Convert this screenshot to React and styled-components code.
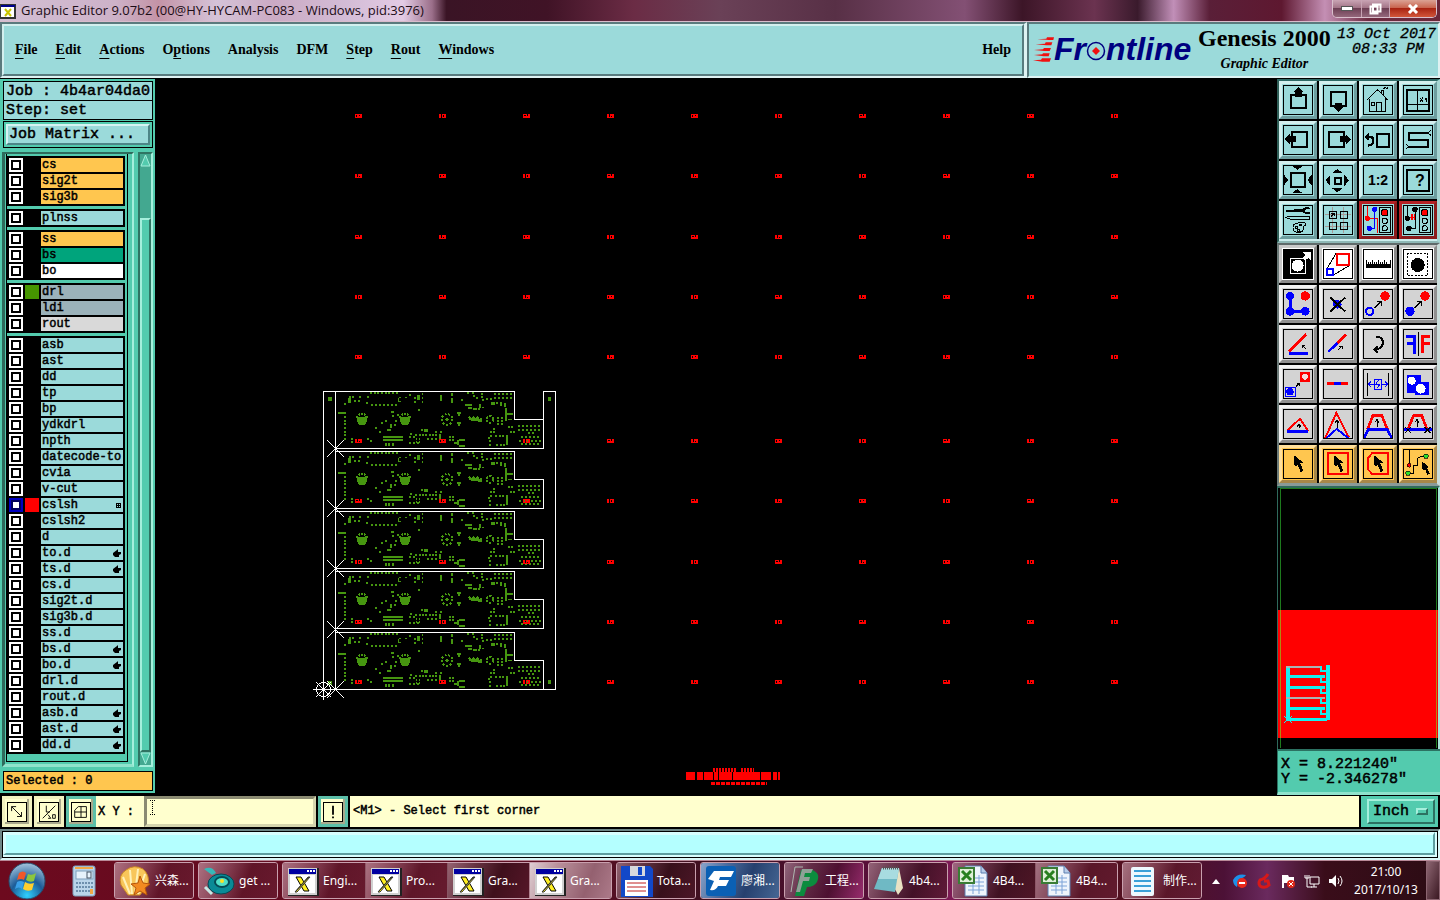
import React from "react";
import styled, { createGlobalStyle, css } from "styled-components";

const GlobalStyle = createGlobalStyle`
  *, *::before, *::after { box-sizing: border-box; }
  html, body { margin: 0; padding: 0; background: #000; }
  button, input, select { font: inherit; color: inherit; margin: 0; padding: 0; border-radius: 0; }
`;

const serif = `"Liberation Serif", serif`;
const mono = `"Liberation Mono", monospace`;
const sans = `"Noto Sans", "Noto Sans CJK SC", sans-serif`;

const aqua = "#9bdada";
const teal = "#53cbae";
const amber = "#ffc64f";

const inset = (dark, light) => css`
  border: 2px solid;
  border-color: ${dark} ${light} ${light} ${dark};
`;
const outset = (light, dark, width = 2) => css`
  border: ${width}px solid;
  border-color: ${light} ${dark} ${dark} ${light};
`;

const Desktop = styled.div`
  min-height: 100vh;
  display: flex;
  flex-direction: column;
  background: #000;
  color: #000;
`;

/* ---------- window title ---------- */

const TitleBar = styled.header`
  height: 22px;
  flex: none;
  display: flex;
  align-items: flex-start;
  border-bottom: 1px solid #d9bccb;
  font: 13px/21px "Open Sans", sans-serif;
  color: #1c0c16;
  background: linear-gradient(90deg, #d3bfd4 0, #cdb2c8 8%, #c493a6 11%, #d5c3d8 15%, #cbaac4 19%, #d3bcd6 24%, #e3cbe4 28%,
    #9b6f8a 30%, #3a1425 31%, #401326 38%, #6b2c45 44%, #6a4157 50%, #583046 58%, #835074 67%,
    #3c1527 71%, #6b3350 76%, #3a1a2c 79%, #c18fb8 81.5%, #5a1f38 84%, #5e1830 89%, #c48fb4 92%, #6e2c42 95%, #6b2638 100%);
`;
const TitleIcon = styled.svg`
  width: 16px;
  height: 16px;
  margin: 4px 5px 0 0;
  flex: none;
`;
const TitleText = styled.h1`
  margin: 0;
  flex: 1;
  font: inherit;
  white-space: nowrap;
`;
const WindowButtons = styled.div`
  display: flex;
  margin-right: 3px;
  height: 18px;
  border: 1px solid #d9c0cc;
  border-top: 0;
  border-radius: 0 0 5px 5px;
  overflow: hidden;
`;
const WindowButton = styled.button`
  width: ${(p) => (p.$close ? 47 : 28)}px;
  border: 0;
  border-left: ${(p) => (p.$first ? 0 : 1)}px solid #c7a3b3;
  display: flex;
  align-items: center;
  justify-content: center;
  background: ${(p) =>
    p.$close
      ? "linear-gradient(#dba294 0, #c9654f 45%, #a92412 50%, #d2563a 100%)"
      : "linear-gradient(#c9a4b4 0, #a37588 45%, #6d3f54 50%, #94677b 100%)"};
`;

/* ---------- menu + brand ---------- */

const TopRow = styled.div`
  height: 57px;
  flex: none;
  display: grid;
  grid-template-columns: minmax(0, 1fr) 413px;
  border-bottom: 1px solid #000;
`;
const MenuFrame = styled.div`
  ${inset("#5a7a7d", "#def2f2")}
  border-right-width: 3px;
  background: ${aqua};
`;
const MenuBar = styled.nav`
  ${outset("#d3efee", "#587b7e")}
  height: 100%;
  display: flex;
  align-items: center;
  gap: 18px;
  padding: 0 11px;
  font: bold 14px/20px ${serif};
`;
const MenuButton = styled.button`
  border: 0;
  background: none;
  margin-left: ${(p) => (p.$end ? "auto" : "0")};
  u { text-underline-offset: 4px; text-decoration-thickness: 1px; text-decoration-skip-ink: none; }
`;
const Brand = styled.div`
  ${inset("#5a7a7d", "#def2f2")}
  background: ${aqua};
  display: flex;
  padding: 0 2px 0 4px;
`;
const Logo = styled.div`
  display: flex;
  align-items: center;
  height: 50px;
  color: #000080;
  font: italic bold 32px/36px "Liberation Sans", sans-serif;
`;
const Product = styled.div`
  margin-left: 3px;
  width: 140px;
  text-align: center;
  white-space: nowrap;
`;
const ProductName = styled.div`
  font: bold 24px/28px ${serif};
`;
const ProductPart = styled.div`
  font: italic bold 14px/24px ${serif};
`;
const Clock = styled.div`
  flex: 1;
  text-align: right;
  font: italic 15px/15px ${mono};
  padding-top: 3px;
  white-space: nowrap;
  -webkit-text-stroke: 0.3px #000;
  span { display: block; }
  span + span { padding-right: 12px; }
`;

/* ---------- main area ---------- */

const Main = styled.main`
  flex: 1;
  display: flex;
  min-height: 716px;
`;

const Side = styled.aside`
  width: 155px;
  flex: none;
  display: flex;
  flex-direction: column;
  background: ${teal};
  padding: 2px 2px 2px 3px;
  border-bottom: 2px solid #000;
`;
const InfoLine = styled.div`
  height: 20px;
  border: 1px solid #000;
  margin-bottom: -1px;
  background: ${aqua};
  padding-left: 2px;
  font: 15px/20px ${mono};
  -webkit-text-stroke: 0.5px #000;
  white-space: nowrap;
`;
const MatrixBox = styled.div`
  border: 1px solid #000;
  height: 27px;
  margin-top: 2px;
  padding: 2px;
`;
const MatrixButton = styled.button`
  ${outset("#d6f3f2", "#4d8587")}
  display: block;
  width: 100%;
  height: 21px;
  background: ${aqua};
  text-align: left;
  padding-left: 1px;
  font: 15px/16px ${mono};
  -webkit-text-stroke: 0.5px #000;
`;
const ListArea = styled.div`
  flex: 1;
  display: flex;
  margin-top: 4px;
  margin-left: -1px;
`;
const ListFrame = styled.div`
  width: 132px;
  border-style: solid;
  border-width: 2px 5px 3px 3px;
  border-color: #2f6a5c #8fe3cc #8fe3cc #2f6a5c;
  border-right: 2px solid #a5efdc;
  background: ${teal};
  padding: 0 4px 2px 1px;
  display: flex;
`;
const ListInner = styled.div`
  flex: 1;
  border: 1px solid #000;
  border-top: 0;
  padding-top: 2px;
  padding-right: 2px;
`;
const Group = styled.div`
  background: #000;
  padding: 1px 2px 1px 2px;
  margin-bottom: 3px;
`;
const LayerRow = styled.label`
  display: flex;
  height: 16px;
  align-items: center;
  gap: 2px;
  font: 12px/14px ${mono};
`;
const LayerCheck = styled.input`
  appearance: none;
  width: 14px;
  height: 14px;
  flex: none;
  background: #fff;
  border: 2px solid ${(p) => (p.$active ? "#0000c0" : "#fff")};
  box-shadow: inset 0 0 0 2px ${(p) => (p.$active ? "#00005c" : "#000")};
`;
const Swatch = styled.span`
  width: 14px;
  height: 14px;
  flex: none;
  background: ${(p) => p.$color || "#000"};
`;
const LayerName = styled.span`
  flex: 1;
  height: 14px;
  display: flex;
  justify-content: space-between;
  align-items: center;
  padding: 0 2px 0 1px;
  white-space: nowrap;
  background: ${(p) => p.$color};
  -webkit-text-stroke: 0.5px #000;
`;
const ScrollBar = styled.div`
  width: 15px;
  margin-left: 4px;
  ${inset("#2f7463", "#a5efdc")}
  background: #43a890;
  display: flex;
  flex-direction: column;
`;
const ScrollThumb = styled.div`
  flex: 1;
  margin-top: 51px;
  border: solid;
  border-width: 2px;
  border-color: #a5efdc #2f7463 #2f7463 #a5efdc;
  background: ${teal};
`;
const Selected = styled.div`
  height: 20px;
  margin-top: 4px;
  border: 1px solid #000;
  background: ${amber};
  padding-left: 2px;
  font: 12px/18px ${mono};
  -webkit-text-stroke: 0.5px #000;
`;

const Canvas = styled.section`
  flex: 1;
  min-width: 0;
  background: #000;
  display: flex;
  svg { width: 100%; height: 716px; }
`;

/* ---------- tool palette ---------- */

const ToolSide = styled.aside`
  width: 163px;
  flex: none;
  display: flex;
  flex-direction: column;
  background: #000;
`;
const palettes = {
  aqua: { bg: aqua, light: "#d3efee", dark: "#6d9d9e" },
  red: { bg: aqua, light: "#b52024", dark: "#8c1c1c" },
  white: { bg: "#fff", light: "#c9c9c9", dark: "#8a8a8a" },
  gray: { bg: "#d3d3d3", light: "#f2f2f2", dark: "#8f8f8f" },
  amber: { bg: amber, light: "#ffdf9c", dark: "#a78748" },
};
const ToolPanel = styled.div`
  background: ${(p) => (p.$gray ? "#8a9a98" : "#cdeeee")};
  border: 2px solid;
  border-right-width: 3px;
  padding-bottom: ${(p) => (p.$gray ? 1 : 2)}px;
  border-color: ${(p) => (p.$gray ? "#5f6a6a #c9dcda #8a9a98 #6d7c7a" : "#2f6a66 #a6d6d3 #8fb8b6 #2f5f58")};
`;
const ToolGrid = styled.div`
  background: #000;
  display: grid;
  grid-template-columns: repeat(4, 38px);
  gap: 2px;
`;
const ToolButton = styled.button`
  width: 38px;
  height: 38px;
  display: flex;
  align-items: center;
  justify-content: center;
  background: ${(p) => palettes[p.$kind].bg};
  border: 3px solid;
  border-color: ${(p) => {
    const { light, dark } = palettes[p.$kind];
    return `${light} ${dark} ${dark} ${light}`;
  }};
`;
const ToolIcon = styled.svg`
  width: 30px;
  height: 30px;
  flex: none;
  border: 1px solid #000;
`;
const Overview = styled.div`
  flex: 1;
  border-top: 2px solid #2f6a5c;
  border-left: 1px solid #2f6a5c;
  border-right: 2px solid #a8e6da;
  display: flex;
  svg { width: 100%; height: 260px; }
`;
const Readout = styled.dl`
  margin: 0;
  height: 46px;
  border-top: 2px solid #2c7262;
  border-bottom: 3px solid #8fe3cc;
  border-left: 1px solid #2c7262;
  background: ${teal};
  padding: 6px 3px;
  font: 15px/15px ${mono};
  -webkit-text-stroke: 0.5px #000;
  div { display: flex; gap: 9px; }
  dd { margin: 0; }
`;

/* ---------- command and message lines ---------- */

const CommandBar = styled.form`
  height: 34px;
  flex: none;
  display: flex;
  align-items: stretch;
  gap: 2px;
  padding: 1px 2px 2px;
  background: #000;
  font: 12px/16px ${mono};
  -webkit-text-stroke: 0.5px #000;
`;
const CommandButton = styled.button`
  width: 30px;
  display: flex;
  align-items: center;
  justify-content: center;
  border: 3px solid ${(p) => (p.$on ? "#5cbfa8" : "#f2f2c0")};
  background: #ffffce;
  box-shadow: inset -1px -1px 0 1px #a9a98c;
  svg { width: 20px; height: 20px; border: 1px solid #000; flex: none; }
`;
const CommandField = styled.label`
  position: relative;
  display: flex;
  align-items: center;
  gap: 10px;
  background: #ffffce;
  padding-left: 2px;
  margin-left: -2px;
  width: 220px;
  white-space: pre;
`;
const CommandInput = styled.input`
  flex: 1;
  min-width: 0;
  height: 31px;
  background: #ffffce;
  border: 3px solid;
  border-color: #8b8b72 #d5d5ae #d5d5ae #8b8b72;
  padding: 0 5px;
  outline: 0;
`;
const TextPointer = styled.svg`
  position: absolute;
  left: 54px;
  top: 4px;
  width: 5px;
  height: 15px;
`;
const Hint = styled.output`
  flex: 1;
  background: #ffffce;
  padding-left: 3px;
  line-height: 31px;
`;
const UnitFrame = styled.span`
  width: 77px;
  background: ${teal};
  padding: 3px 3px 3px 6px;
`;
const UnitBox = styled.span`
  ${outset("#a5efdc", "#2c7262")}
  height: 100%;
  display: flex;
  align-items: center;
  justify-content: space-between;
  padding: 0 5px 0 4px;
  font: 15px/20px ${mono};
`;
const UnitSelect = styled.select`
  appearance: none;
  border: 0;
  background: none;
  width: 42px;
`;
const UnitMark = styled.span`
  width: 12px;
  height: 7px;
  ${outset("#a5efdc", "#2c7262")}
`;
const StatusFrame = styled.div`
  height: 31px;
  flex: none;
  border-top: 2px solid #6f8787;
  border-left: 2px solid #6f8787;
  border-right: 2px solid #d8f7f7;
  border-bottom: 2px solid #d8f7f7;
`;
const StatusBox = styled.div`
  height: 100%;
  border: 1px solid #000;
  background: #d8ffff;
  padding: 0 2px 2px 0;
`;
const StatusLine = styled.div`
  height: 100%;
  background: #b4ffff;
  border: 3px solid;
  border-color: #d8ffff #5d9ea0 #5d9ea0 #d8ffff;
  border-width: 3px 2px 2px 3px;
`;

/* ---------- taskbar ---------- */

const TaskBar = styled.footer`
  height: 40px;
  flex: none;
  display: flex;
  align-items: stretch;
  border-top: 1px solid #b98a98;
  color: #fff;
  font: 12px/18px ${sans};
  background: linear-gradient(90deg, #6d0a1e 0, #650b20 14%, #5b1024 40%, #3c1020 50%, #5c0f3c 62%, #7d1a55 66%, #4a1020 72%,
    #551020 80%, #4c1136 85%, #6a2a5e 88%, #3a0d1a 92%, #2c0c14 100%);
`;
const StartButton = styled.button`
  border: 0;
  background: none;
  width: 54px;
  display: flex;
  align-items: center;
  justify-content: center;
`;
const PinnedButton = styled(StartButton)`
  width: 60px;
`;
const TaskList = styled.div`
  display: flex;
  gap: 4px;
  flex: 1;
  padding: 1px 0;
`;
const TaskGroup = styled.div`
  display: flex;
  border: 1px solid #c9a0ae;
  border-radius: 3px;
  overflow: hidden;
`;
const taskTone = {
  plain: "linear-gradient(110deg, #cfa3b0aa 0, #9d6173aa 30%, #5e1a2caa 60%, #6a2034aa 100%)",
  dark: "linear-gradient(110deg, #b18d98aa 0, #6b4450aa 30%, #301018aa 60%, #521a2aaa 100%)",
  active: "linear-gradient(110deg, #ffffffcc 0, #d2b1bacc 30%, #a37583cc 70%, #c294a2cc 100%)",
  blue: "linear-gradient(110deg, #8aa5cb 0, #4a6a9c 30%, #26406e 60%, #466794 100%)",
  pink: "linear-gradient(110deg, #b690a4aa 0, #6d3a52aa 30%, #4c1030aa 60%, #b83a88aa 100%)",
};
const TaskButton = styled.button`
  width: ${(p) => (p.$grouped ? 82 : 78)}px;
  border: 0;
  display: flex;
  align-items: center;
  gap: 3px;
  padding-left: 3px;
  background: ${(p) => taskTone[p.$tone]};
  white-space: nowrap;
  & + & { border-left: 1px solid #b58d9a88; }
  svg { width: 34px; height: 32px; flex: none; }
`;
const Tray = styled.div`
  display: flex;
  align-items: center;
  gap: 8px;
  padding-right: 6px;
  svg { width: 16px; height: 16px; flex: none; }
`;
const TrayClock = styled.time`
  width: 68px;
  text-align: center;
  white-space: nowrap;
  span { display: block; }
`;
const ShowDesktop = styled.button`
  width: 14px;
  border: 1px solid #8b6470;
  background: linear-gradient(110deg, #8d6672, #3b1822);
`;

/* ---------- data ---------- */

const layerGroups = [
  [["cs", amber], ["sig2t", amber], ["sig3b", amber]],
  [["plnss", aqua]],
  [["ss", amber], ["bs", "#00a47c"], ["bo", "#fff"]],
  [["drl", "#9bb2ba", "#469600"], ["ldi", "#9bb2ba"], ["rout", "#d9d9d9"]],
  [
    ["asb"], ["ast"], ["dd"], ["tp"], ["bp"], ["ydkdrl"], ["npth"], ["datecode-to"], ["cvia"], ["v-cut"],
    ["cslsh", aqua, "#ff0000", "grid"], ["cslsh2"], ["d"], ["to.d", aqua, null, "hand"], ["ts.d", aqua, null, "hand"],
    ["cs.d"], ["sig2t.d"], ["sig3b.d"], ["ss.d"], ["bs.d", aqua, null, "hand"], ["bo.d", aqua, null, "hand"],
    ["drl.d"], ["rout.d"], ["asb.d", aqua, null, "hand"], ["ast.d", aqua, null, "hand"], ["dd.d", aqua, null, "hand"],
  ],
];

const K = "#000";
const B = "#0000ff";
const R = "#ff0000";
/* icon strokes are drawn on a grid of three units to the pixel */
const pen = (w) => (w <= 3 ? 3 : w <= 6 ? 6 : w);
const ln = (d, c = K, w = 3) => <path d={d} fill="none" stroke={c} strokeWidth={pen(w)} />;
const arrowUp = (x, top, bottom) => ln(`M${x} ${bottom}V${top}M${x - 6} ${top + 8}L${x} ${top}L${x + 6} ${top + 8}`);
const diagArrow = ln("M34 58L54 38M42 38H54V50");
const cursor = <path d="M32 18L60 40L52 43L61 65L53 69L44 48L35 54Z" />;
const light = (
  <>
    <rect x="50" y="7" width="32" height="76" fill={aqua} stroke={K} strokeWidth="3" />
    <circle cx="65" cy="23" r="10" fill={R} stroke={K} strokeWidth="3" />
    <circle cx="65" cy="48" r="8" fill="none" stroke={K} strokeWidth="3" />
    <circle cx="65" cy="70" r="8" fill="none" stroke={K} strokeWidth="3" />
  </>
);

const viewTools = [
  ["aqua", "Pan up", <>{ln("M24 30H69V69H24Z", K, 5)}<path d="M46 6L62 22H56V36H36V22H30Z" /></>],
  ["aqua", "Pan down", <>{ln("M24 21H69V63H24Z", K, 5)}<path d="M46 82L30 66H36V54H56V66H62Z" /></>],
  ["aqua", "Home view", <>{ln("M12 45L44 14L74 45M20 42V80H66V42M40 80V53H54V80M26 52H33V60H26ZM56 24V16H62V30M62 12L68 6M70 12L74 8")}</>],
  ["aqua", "Zoom to XY", <>{ln("M12 15H78V78H12Z", K, 4)}{ln("M11 58H77M44 13V78M52 38L60 50M60 38L52 50M65 38L69 44L73 38M69 44V50", K, 2)}</>],
  ["aqua", "Pan left", <>{ln("M27 21H72V66H27Z", K, 5)}<path d="M5 43L20 28V34H38V52H20V58Z" /></>],
  ["aqua", "Pan right", <>{ln("M18 21H63V66H18Z", K, 5)}<path d="M84 43L69 28V34H51V52H69V58Z" /></>],
  ["aqua", "Previous view", <>{ln("M42 27H78V66H42Z", K, 5)}{ln("M12 35H22Q32 38 31 48Q29 61 14 62", K, 7)}<path d="M3 36L18 24V47Z" /></>],
  ["aqua", "Serpentine", <>{ln("M76 24H18V45H75V66H18", K, 5)}{ln("M82 16L75 25L84 31M10 58L18 65L8 73", K, 2)}</>],
  ["aqua", "Zoom in", <>{ln("M24 24H66V66H24Z", K, 5)}<path d="M28 4H58L43 14ZM28 84H58L43 72ZM4 30V60L15 45ZM86 30V60L73 45Z" /></>],
  ["aqua", "Zoom out", <>{ln("M36 39H54V57H36Z", K, 5)}<path d="M26 25L43 12L60 25ZM26 69L43 82L60 69ZM22 29V63L8 46ZM64 29V63L78 46Z" /></>],
  ["aqua", "Scale one to two", <text x="45" y="61" fontSize="42" fontWeight="bold" textAnchor="middle" fontFamily="Liberation Sans">1:2</text>],
  ["aqua", "Help", <>{ln("M12 15H78V78H12Z", K, 4)}<text x="51" y="64" fontSize="48" fontWeight="bold" textAnchor="middle" fontFamily="Liberation Sans">?</text></>],
  ["aqua", "Setup", <>{ln("M8 17H36", K, 4)}{ln("M34 17H62", K, 10)}{ln("M80 11L72 9Q60 12 62 17Q64 27 80 23", K, 6)}{ln("M8 37L20 33H80V42H20Z", K, 2)}{ln("M30 70Q28 56 44 54Q66 48 68 58Q68 62 60 64Q66 72 56 80Q40 86 30 76Z")}{ln("M38 64H44V70H38ZM48 58H54V62H48ZM44 73H50V78H44Z", K, 2)}</>],
  ["aqua", "Panels", <>{ln("M5 29H85M5 63H85M28 5V85M62 5V85", "#a89a96", 2)}{ln("M18 19H39V40H18ZM51 19H73V40H51ZM18 53H39V74H18ZM51 53H73V74H51Z")}{ln("M23 35L33 25M25 25H33V33", K, 2)}</>],
  ["red", "Online check", <>{ln("M13 3V40H43V84", R)}{ln("M35 13V70H19", B)}<circle cx="13" cy="40" r="8" fill={R} /><circle cx="35" cy="13" r="8" fill={B} /><circle cx="19" cy="70" r="8" fill={B} />{light}</>],
  ["red", "Spacing check", <>{ln("M13 3V40M36 13V70H18")}{ln("M22 36H34M24 26V44M29 28V44M34 28V44", R)}<circle cx="13" cy="40" r="8" /><circle cx="36" cy="13" r="8" /><circle cx="18" cy="70" r="8" />{light}</>],
];

const editTools = [
  ["white", "Snap target", <><rect x="3" y="3" width="84" height="84" /><path d="M60 28L66 18L58 10H84V36L76 28L66 34Z" fill="#fff" />{ln("M22 28H66V72H22Z", "#fff", 3)}<circle cx="44" cy="50" r="18" fill="#fff" /></>],
  ["white", "Scale feature", <>{ln("M11 60L40 12M30 79L78 50", K, 2)}{ln("M42 15H78V48H42Z", R, 6)}{ln("M12 60H30V78H12Z", B, 5)}</>],
  ["white", "Measure", <><rect x="9" y="44" width="74" height="14" />{ln("M10 34V44M16 38V44M22 38V44M28 34V44M34 38V44M40 38V44M46 34V44M52 38V44M58 38V44M64 34V44M70 38V44M81 34V44")}</>],
  ["white", "Highlight", <><circle cx="44" cy="48" r="21" /><rect x="12" y="14" width="62" height="65" fill="none" stroke={K} strokeWidth="3" strokeDasharray="6 4" /></>],
  ["gray", "Connect", <>{ln("M21 21V67H67", B, 9)}<circle cx="21" cy="21" r="13" fill={B} /><circle cx="21" cy="67" r="13" fill={B} /><circle cx="67" cy="67" r="13" fill={B} /><circle cx="67" cy="21" r="14" fill={R} /></>],
  ["gray", "Delete", <><circle cx="43" cy="46" r="13" fill={B} />{ln("M22 26L66 67M66 26L22 67", K, 6)}</>],
  ["gray", "Copy feature", <><circle cx="66" cy="21" r="14" fill={R} /><circle cx="20" cy="67" r="11" fill="none" stroke={B} strokeWidth="6" />{diagArrow}</>],
  ["gray", "Move feature", <><circle cx="66" cy="21" r="14" fill={R} /><circle cx="21" cy="67" r="14" fill={B} />{diagArrow}</>],
  ["gray", "Rotate line", <>{ln("M17 68L70 16", R, 8)}{ln("M19 73H75", B, 8)}{ln("M69 59L58 49M58 57V48H67", K, 2)}</>],
  ["gray", "Extend line", <>{ln("M42 43L69 16", R, 8)}{ln("M16 68L43 42", B, 8)}{ln("M46 62L58 51M49 51H58V60", K, 2)}</>],
  ["gray", "Rotate", <>{ln("M40 23H46Q60 28 60 42Q58 60 34 62M44 52L34 62L44 71", K, 4)}</>],
  ["gray", "Mirror", <>{ln("M8 23H34V75M12 43H34", B, 8)}{ln("M45 8V80", K, 3)}{ln("M80 23H58V72M58 43H80", R, 8)}</>],
  ["gray", "Copy to location", <>{ln("M6 54H36V83H6Z", B)}<circle cx="21" cy="68" r="11" fill={B} /><rect x="51" y="8" width="31" height="30" fill={R} /><circle cx="66" cy="23" r="9" fill="#f4dcdc" />{ln("M39 52L48 43M41 43H49V51", K, 2)}</>],
  ["gray", "Break line", <>{ln("M12 43H75", R, 9)}{ln("M34 43H53", B, 9)}</>],
  ["gray", "Stretch", <>{ln("M12 11V81M76 11V81")}{ln("M16 46H33M55 46H74M24 38L16 46L24 54M66 38L74 46L66 54M33 31H55V61H33ZM46 34L38 46H50L43 58", B)}</>],
  ["gray", "Merge surfaces", <><path d="M11 19H55V38H78V78H37V71H11Z" fill={B} /><circle cx="26" cy="35" r="12" fill="#fff" /><circle cx="53" cy="59" r="15" fill="#fff" /></>],
  ["gray", "Slide corner", <>{ln("M12 66L51 29L75 66", R, 6)}{ln("M13 68H75", B, 8)}{arrowUp(48, 46, 58)}</>],
  ["gray", "Raise corner", <>{ln("M7 87L40 12L78 86", R, 5)}{ln("M10 87L41 60L76 87", B, 6)}{arrowUp(42, 34, 56)}</>],
  ["gray", "Slide segment", <>{ln("M14 60L30 19H56L73 60", R, 8)}{ln("M3 86L15 62H73L86 86", B, 8)}{arrowUp(42, 32, 54)}</>],
  ["gray", "Slide between", <>{ln("M15 60L32 19H56L72 60", R, 8)}{ln("M3 62H86", B, 8)}{ln("M6 54L24 72M24 54L6 72M64 54L82 72M82 54L64 72", K, 2)}{arrowUp(42, 32, 54)}</>],
  ["amber", "Select", cursor],
  ["amber", "Select by frame", <>{ln("M14 12H75V75H14Z", R, 5)}{cursor}</>],
  ["amber", "Select by polygon", <>{ln("M28 12H75V75H28L14 60V28Z", R, 5)}{cursor}</>],
  ["amber", "Select net", <>{ln("M18 4V49M15 73H30V50H44V28L56 22H69")}<circle cx="18" cy="49" r="6" fill={R} stroke={K} strokeWidth="2" /><circle cx="15" cy="73" r="7" fill="#2be02b" stroke={K} strokeWidth="2" /><circle cx="69" cy="22" r="7" fill="#2be02b" stroke={K} strokeWidth="2" /><path d="M56 36L78 54L72 57L80 74L74 78L66 61L59 66Z" /></>],
];

/* board artwork: x, y, count across, count down, pitch, width, height (thirds of a canvas pixel) */
const pads = [
  [180, 37, 8, 1, 11, 6, 5], [182, 72, 7, 1, 12, 6, 5], [113, 54, 1, 1, 0, 10, 14], [118, 48, 1, 1, 0, 6, 6], [127, 47, 2, 1, 19, 6, 5],
  [131, 60, 2, 1, 13, 5, 5], [103, 70, 1, 1, 0, 6, 5], [172, 48, 1, 1, 0, 5, 5], [167, 66, 1, 1, 0, 7, 5],
  [264, 54, 1, 1, 0, 4, 12], [268, 51, 1, 2, 13, 5, 4], [296, 42, 1, 1, 0, 7, 6], [285, 51, 1, 1, 0, 5, 4],
  [311, 50, 1, 2, 13, 5, 5], [321, 46, 1, 1, 0, 10, 14], [337, 38, 1, 3, 13, 4, 7], [324, 86, 1, 1, 0, 6, 6],
  [390, 45, 1, 1, 0, 6, 17], [424, 39, 1, 1, 0, 5, 8], [424, 54, 1, 1, 0, 5, 14], [471, 37, 2, 1, 14, 7, 6],
  [490, 45, 1, 1, 0, 5, 6], [497, 51, 1, 1, 0, 7, 5], [512, 40, 1, 2, 9, 6, 6], [516, 58, 1, 1, 0, 5, 5], [454, 57, 1, 1, 0, 5, 6],
  [466, 71, 3, 1, 6, 8, 6], [474, 80, 2, 1, 7, 7, 5], [488, 84, 3, 1, 8, 7, 5], [508, 72, 1, 2, 7, 6, 6], [515, 80, 1, 1, 0, 7, 4],
  [552, 39, 5, 2, 12, 6, 5], [528, 54, 2, 1, 13, 6, 5], [543, 67, 1, 1, 0, 12, 10], [559, 66, 1, 1, 0, 6, 5],
  [570, 65, 1, 1, 0, 5, 12], [582, 68, 1, 1, 0, 5, 12], [84, 96, 1, 1, 0, 18, 6], [103, 97, 1, 8, 11, 5, 6],
  [194, 140, 1, 1, 0, 6, 6], [206, 153, 1, 1, 0, 6, 6], [224, 119, 1, 1, 0, 5, 5], [212, 127, 1, 1, 0, 5, 5],
  [240, 131, 1, 1, 0, 5, 13], [230, 148, 2, 1, 8, 5, 5], [243, 93, 1, 1, 0, 9, 5], [262, 103, 1, 1, 0, 5, 5],
  [255, 119, 1, 1, 0, 5, 5], [252, 132, 1, 1, 0, 5, 5], [246, 104, 1, 1, 0, 5, 6],
  [441, 96, 2, 1, 7, 6, 5], [444, 101, 1, 1, 0, 6, 5], [441, 126, 2, 1, 7, 6, 5], [444, 131, 1, 1, 0, 6, 5],
  [562, 110, 2, 3, 10, 5, 7], [586, 84, 1, 1, 0, 5, 40], [591, 99, 1, 1, 0, 18, 5], [593, 118, 1, 1, 0, 12, 4],
  [219, 167, 1, 2, 10, 60, 6], [224, 190, 3, 1, 11, 7, 10], [316, 162, 8, 1, 10, 6, 5], [300, 158, 1, 1, 0, 6, 5],
  [342, 146, 2, 1, 6, 6, 9], [334, 148, 1, 1, 0, 6, 5], [298, 168, 2, 1, 11, 5, 5], [298, 186, 3, 1, 12, 5, 5], [318, 174, 2, 2, 10, 4, 5],
  [350, 175, 3, 1, 12, 5, 5], [376, 152, 2, 1, 15, 5, 5], [416, 168, 2, 2, 10, 5, 6], [432, 186, 1, 1, 0, 9, 5], [386, 166, 1, 1, 0, 5, 12],
  [446, 177, 1, 1, 0, 18, 5], [442, 181, 1, 1, 0, 5, 14], [446, 194, 1, 1, 0, 18, 5], [548, 145, 1, 2, 9, 6, 5], [540, 154, 1, 2, 10, 5, 5],
  [533, 170, 1, 1, 0, 5, 5], [538, 180, 1, 2, 11, 5, 5], [558, 192, 3, 1, 11, 6, 5], [556, 166, 3, 1, 10, 5, 5], [588, 166, 1, 1, 0, 5, 30],
  [594, 138, 2, 1, 10, 6, 5], [600, 152, 2, 1, 10, 6, 5], [624, 135, 6, 2, 12, 7, 6], [654, 157, 2, 1, 12, 6, 5], [634, 169, 5, 1, 12, 6, 5],
  [628, 180, 6, 1, 12, 6, 5], [634, 190, 5, 1, 12, 6, 5], [122, 174, 1, 2, 10, 5, 5], [172, 174, 1, 1, 0, 5, 6], [180, 181, 1, 1, 0, 6, 5],
];
const px = (v) => Math.round(v / 3);
const padPath = pads
  .map(([x, y, nx, ny, p, w, h]) => {
    let d = "";
    for (let i = 0; i < nx; i++)
      for (let j = 0; j < ny; j++) d += `M${px(x + i * p)} ${px(y + j * p)}h${px(w)}v${px(h)}h${-px(w)}z`;
    return d;
  })
  .join("");

/* small legend blocks: a filled cell with a few open pixels, or split digits */
const legends = [
  "h7v4h-7zM1 1h1v2h-1zM4 1h1v1h-1z",
  "h7v4h-7zM2 0h1v3h-1zM4 2h1v1h-1z",
  "h7v4h-7zM1 1h2v1h-2zM4 0h1v2h-1z",
  "h2v4h-2zM3 0h4v4h-4zM4 1h1v2h-1z",
];

const boardTops = [391, 451, 511, 571, 632];
const markerX = [358, 442, 526, 610, 694, 778, 862, 946, 1030, 1114];
const markerY = [114, 174, 235, 295, 355, 439, 499, 560, 620, 680];
const barcode = [0, 3, 6, 11, 13, 15, 18, 21, 24, 28, 30, 33, 35, 38, 41, 43, 47, 49, 51, 54, 57, 59, 62, 66, 69, 72, 75, 77, 80, 83, 87, 89, 92];

function Tool({ item }) {
  const [kind, name, art] = item;
  return (
    <ToolButton type="button" $kind={kind} aria-label={name} title={name}>
      <ToolIcon viewBox="3 3 84 84" shapeRendering="crispEdges">{art}</ToolIcon>
    </ToolButton>
  );
}

function LayerMark({ kind }) {
  if (kind === "hand")
    return (
      <svg width="8" height="9" viewBox="0 0 8 9"><path d="M0 4L4 1L5 0V3H8V5L6 6V8H2L0 6Z" /></svg>
    );
  if (kind === "grid")
    return (
      <svg width="5" height="5" viewBox="0 0 5 5" shapeRendering="crispEdges"><path d="M0 0h5v5h-5zM1 1v1h1v-1zM3 1v1h1v-1zM1 3v1h1v-1zM3 3v1h1v-1z" fillRule="evenodd" /></svg>
    );
  return null;
}

function PanelDrawing() {
  return (
    <svg viewBox="155 79 1122 716" preserveAspectRatio="xMidYMin meet" shapeRendering="crispEdges" role="img" aria-label="Panel set artwork">
      {boardTops.map((top) => (
        <g key={top} transform={`translate(310 ${top - 11})`} fill="#469610">
          <path d={padPath} />
          <g transform="scale(0.33333)">
            {[156, 285].map((cx) => (
              <g key={cx}>
                <path d={`M${cx - 13} 110h26l2 8l-3 14l-6 4h-12l-6 -4l-3 -14z`} />
                <path d={`M${cx - 16} 114Q${cx} 88 ${cx + 16} 114`} fill="none" stroke="#469610" strokeWidth="6" strokeDasharray="6 3" />
              </g>
            ))}
            <circle cx="411" cy="118" r="16" fill="none" stroke="#469610" strokeWidth="6" strokeDasharray="6 5" />
            <circle cx="411" cy="118" r="5" />
            <circle cx="540" cy="118" r="10" fill="none" stroke="#469610" strokeWidth="6" strokeDasharray="6 5" />
            <path d="M476 110l8 8l6 -6l6 8l6 -8l6 8l8 -4M478 116l10 4l8 -2l10 4h10" fill="none" stroke="#469610" strokeWidth="6" />
          </g>
        </g>
      ))}
      <path d="M328 397h4v4h-4zM548 397h3v4h-3zM328 681h4v4h-4zM548 680h3v4h-3z" fill="#469610" />
      <g fill="none" stroke="#fff">
        <path d="M323.5 689.5V391.5H514.5V419.5H543.5V391.5H555.5V689.5Z" />
        <path d="M335.5 391.5V689.5" />
        <path d="M543.5 419.5V448.5H335.5" />
        {boardTops.slice(1).map((top) => (
          <path key={top} d={`M335.5 ${top + 0.5}H514.5V${top + 28.5}H543.5V${top + 57.5}H335.5`} />
        ))}
        {[448, 508, 568, 629, 689].map((y) => (
          <path key={y} d={`M327 ${y - 8}L344 ${y + 9}M344 ${y - 8}L327 ${y + 9}`} />
        ))}
        <path d="M313 689.5H334M323.5 679V700M316 682L331 697M331 682L316 697" />
        <circle cx="323.5" cy="689.5" r="7" />
      </g>
      <g fill="#f00" fillRule="evenodd">
        {markerY.map((y, r) =>
          markerX.map((x, c) => (
            <path key={`${x}-${y}`} transform={`translate(${x - 3} ${y})`} d={`M0 0${legends[(r + c * 3) % 4]}`} />
          ))
        )}
        {barcode.map((x, i) => (
          <rect key={x} x={686 + x} y="772" width={i % 3 ? 2 : 3} height="8" />
        ))}
        <path d="M686 772h9v8h-9zM704 772h9v8h-9zM722 772h8v8h-8zM742 772h15v8h-15zM764 772h7v8h-7z" />
      </g>
      <path d="M713 770H737M741 770H754" stroke="#f00" strokeWidth="4" strokeDasharray="2 1" />
      <path d="M711 783.500H767" stroke="#f00" strokeWidth="3" strokeDasharray="4 1" />
    </svg>
  );
}

function OverviewDrawing() {
  return (
    <svg viewBox="1278 488 160 260" preserveAspectRatio="xMinYMin slice" shapeRendering="crispEdges" role="img" aria-label="Overview">
      <rect x="1278" y="610" width="162" height="128" fill="#f00" />
      <path d="M1280.500 748V488.500H1436.500V748" fill="none" stroke="#b08a10" />
      <path d="M1280.500 610V488.500H1436.500V610M1280.500 738V748M1436.500 738V748" fill="none" stroke="#1d7a1d" />
      <g fill="none" stroke="#18f0f0" strokeWidth="3">
        <path d="M1288 720V666M1327.500 665V720" strokeWidth="4" />
        <path d="M1286 676.500H1325M1286 687H1325M1286 708.500H1325M1286 719H1327" />
        <path d="M1286 666.500H1322M1286 698H1325" stroke="#a9b4b4" strokeWidth="2" />
        <path d="M1321 666V671H1327M1321 677V682H1327M1321 688V693H1327M1321 698V703H1327M1321 709V714H1327" strokeWidth="2" />
        <path d="M1284 716L1292 723M1292 716L1284 723" strokeWidth="1" />
      </g>
    </svg>
  );
}

function XWindowIcon() {
  return (
    <svg viewBox="0 0 34 32">
      <rect x="2" y="3" width="31" height="28" fill="#222" />
      <rect x="2" y="3" width="29" height="27" fill="#d0d0d0" />
      <rect x="3" y="4" width="27" height="5" fill="#0000a0" />
      <path d="M21 5h2v2h-2zM24 5h2v2h-2zM27 5h2v2h-2z" fill="#fff" />
      <rect x="4" y="10" width="25" height="18" fill="#fff" />
      <path d="M10 12H15L23 26H18Z" fill="#ffef20" stroke="#000" />
      <path d="M23 12L10 26M22 12H24L11 27H9Z" fill="#ffef20" stroke="#333" />
    </svg>
  );
}
const ShellIcon = () => (
  <svg viewBox="0 0 34 32">
    <path d="M10 30L3 20Q0 10 8 5Q16 -1 25 4Q32 10 30 19L22 30Z" fill="#f8c65a" stroke="#c98725" />
    <path d="M12 29L5 12M14 29L12 5M17 29L20 4M20 29L27 9" stroke="#fff1b8" strokeWidth="2" fill="none" />
    <path d="M22 11L25 18L32 19L27 23L29 30L22 26L16 30L18 23L13 19L20 18Z" fill="#f28a20" stroke="#b65508" />
  </svg>
);
const DiscIcon = () => (
  <svg viewBox="0 0 34 32">
    <path d="M2 4Q10 0 14 8L10 10Z" fill="#38b8b8" />
    <ellipse cx="19" cy="19" rx="13" ry="10" fill="#0a8a96" stroke="#064a55" />
    <ellipse cx="20" cy="17" rx="7" ry="5" fill="#52e0c8" stroke="#064a55" strokeWidth="2" />
    <circle cx="20" cy="16" r="2" fill="#ffe020" />
    <path d="M3 22L10 29" stroke="#c7e8e4" strokeWidth="3" />
  </svg>
);
const FloppyIcon = () => (
  <svg viewBox="0 0 34 32">
    <path d="M1 1H30L33 4V32H1Z" fill="#1248c8" />
    <rect x="10" y="1" width="15" height="10" fill="#d7d9de" /><rect x="18" y="2" width="4" height="8" fill="#1248c8" />
    <rect x="5" y="15" width="23" height="16" fill="#fff" />
    <path d="M7 18H26M7 22H26M7 26H26" stroke="#c02020" />
  </svg>
);
const BlueFIcon = () => (
  <svg viewBox="0 0 34 32">
    <rect x="2" y="1" width="30" height="30" rx="3" fill="#0b60b4" />
    <path d="M10 6H30L27 12H16L15 15H25L22 21H14Q12 26 6 25L10 16L4 14Z" fill="#fff" />
  </svg>
);
const GreenPIcon = () => (
  <svg viewBox="0 0 34 32">
    <path d="M3 27L7 2H15" fill="none" stroke="#aeb8b0" />
    <path d="M13 5H24Q33 8 29 17Q26 22 19 22L16 31H7Z" fill="#0b8c3e" />
    <path d="M14 4H25L23 8H17L16 12H22L21 16H15L12 27H8Z" fill="#8ea096" />
  </svg>
);
const NotepadIcon = () => (
  <svg viewBox="0 0 34 32">
    <path d="M10 3H27L31 23L26 30L24 26Z" fill="#e9e2c4" />
    <path d="M10 3H27L23 27L2 24Z" fill="#6fb9c4" /><path d="M10 3H27L25 14L6 14Z" fill="#a8dce0" />
    <path d="M11 3H27" stroke="#555" strokeWidth="3" strokeDasharray="1 1" />
  </svg>
);
const ExcelIcon = () => (
  <svg viewBox="0 0 34 32">
    <path d="M9 1H25L31 8V31H9Z" fill="#eef4fc" stroke="#5c7fb0" /><path d="M25 1V8H31" fill="#b8cce8" stroke="#5c7fb0" />
    <path d="M12 17H28M12 21H28M12 25H28M17 14V29M23 10V29M19 13H28" stroke="#7da3d8" />
    <rect x="3" y="3" width="15" height="15" fill="#dff0d8" stroke="#3a7c35" strokeWidth="2" />
    <path d="M6 6L15 15M15 6L6 15" stroke="#28801f" strokeWidth="3" />
  </svg>
);
const DocIcon = () => (
  <svg viewBox="0 0 34 32">
    <rect x="5" y="2" width="23" height="29" rx="2" fill="#eef8fe" />
    <path d="M8 6H25M8 11H25M8 16H25M8 21H25M8 26H25" stroke="#3aa0d8" strokeWidth="2" />
  </svg>
);

const tasks = [
  [["兴森...", ShellIcon, "plain"]],
  [["get ...", DiscIcon, "plain"]],
  [["Engi...", XWindowIcon, "plain"], ["Pro...", XWindowIcon, "plain"], ["Gra...", XWindowIcon, "dark"], ["Gra...", XWindowIcon, "active"]],
  [["Tota...", FloppyIcon, "dark"]],
  [["廖湘...", BlueFIcon, "blue"]],
  [["工程...", GreenPIcon, "pink"]],
  [["4b4...", NotepadIcon, "dark"]],
  [["4B4...", ExcelIcon, "dark"], ["4B4...", ExcelIcon, "plain"]],
  [["制作...", DocIcon, "plain"]],
];

const menus = [
  [<><u>F</u>ile</>, "file"], [<><u>E</u>dit</>, "edit"], [<><u>A</u>ctions</>, "actions"], [<>O<u>p</u>tions</>, "options"],
  ["Analysis", "analysis"], ["DFM", "dfm"], [<><u>S</u>tep</>, "step"], [<><u>R</u>out</>, "rout"], [<><u>W</u>indows</>, "windows"],
];

export default function App() {
  return (
    <Desktop>
      <GlobalStyle />
      <TitleBar>
        <TitleIcon viewBox="0 0 16 16" aria-hidden="true">
          <rect width="16" height="15" fill="#333" /><rect x="1" y="1" width="13" height="12" fill="#fff" /><rect x="1" y="1" width="14" height="2" fill="#00008c" />
          <path d="M5 5L11 12M11 5L5 12" stroke="#c9c400" strokeWidth="2" />
        </TitleIcon>
        <TitleText>Graphic Editor 9.07b2 (00@HY-HYCAM-PC083 - Windows, pid:3976)</TitleText>
        <WindowButtons>
          <WindowButton type="button" $first aria-label="Minimize">
            <svg width="12" height="5"><rect x="0.500" y="0.500" width="11" height="4" fill="#fff" stroke="#555" /></svg>
          </WindowButton>
          <WindowButton type="button" aria-label="Restore">
            <svg width="13" height="12"><path d="M4 1.500H11.500V8.500H4ZM1.500 3.500H8.500V10.500H1.500Z" fill="none" stroke="#fff" strokeWidth="2" /></svg>
          </WindowButton>
          <WindowButton type="button" $close aria-label="Close">
            <svg width="12" height="10"><path d="M2 1L10 9M10 1L2 9" stroke="#fff" strokeWidth="3" /></svg>
          </WindowButton>
        </WindowButtons>
      </TitleBar>

      <TopRow>
        <MenuFrame>
          <MenuBar>
            {menus.map(([label, key]) => <MenuButton type="button" key={key}>{label}</MenuButton>)}
            <MenuButton type="button" $end>Help</MenuButton>
          </MenuBar>
        </MenuFrame>
        <Brand>
          <Logo>
            <svg width="21" height="26" viewBox="0 0 63 78" aria-hidden="true">
              <path d="M13 10L40 8L42 4H63L61 12H46L40 11ZM8 25L36 23L38 19H58L55 28H40ZM3 42L30 40L33 36H54L50 45H35ZM3 57L28 55L30 52H50L47 61H32ZM0 73L24 71L27 67H54L50 77H28Z" fill="#f01010" />
            </svg>
            <span>Fr</span>
            <svg width="20" height="24" viewBox="0 0 20 24" aria-label="o">
              <circle cx="10" cy="14" r="8.500" fill="none" stroke="#000080" strokeWidth="1.500" />
              <path d="M10 10L14 14L10 18L6 14Z" fill="#f01010" />
            </svg>
            <span>ntline</span>
          </Logo>
          <Product>
            <ProductName>Genesis 2000</ProductName>
            <ProductPart>Graphic Editor</ProductPart>
          </Product>
          <Clock><span>13 Oct 2017</span><span>08:33 PM</span></Clock>
        </Brand>
      </TopRow>

      <Main>
        <Side>
          <InfoLine>Job : 4b4ar04da0</InfoLine>
          <InfoLine>Step: set</InfoLine>
          <MatrixBox><MatrixButton type="button">Job Matrix ...</MatrixButton></MatrixBox>
          <ListArea>
            <ListFrame>
              <ListInner>
                {layerGroups.map((group) => (
                  <Group key={group[0][0]}>
                    {group.map(([name, color = aqua, swatch, mark]) => (
                      <LayerRow key={name}>
                        <LayerCheck type="checkbox" $active={name === "cslsh"} />
                        <Swatch $color={swatch} />
                        <LayerName $color={color}>{name}<LayerMark kind={mark} /></LayerName>
                      </LayerRow>
                    ))}
                  </Group>
                ))}
              </ListInner>
            </ListFrame>
            <ScrollBar>
              <svg width="11" height="13" viewBox="0 0 11 13"><path d="M5.500 1L1 12H10Z" fill={teal} stroke="#a5efdc" /></svg>
              <ScrollThumb />
              <svg width="11" height="13" viewBox="0 0 11 13"><path d="M1 1H10L5.500 12Z" fill={teal} stroke="#a5efdc" /></svg>
            </ScrollBar>
          </ListArea>
          <Selected>Selected : 0</Selected>
        </Side>

        <Canvas><PanelDrawing /></Canvas>

        <ToolSide>
          <ToolPanel><ToolGrid>{viewTools.map((t) => <Tool key={t[1]} item={t} />)}</ToolGrid></ToolPanel>
          <ToolPanel $gray><ToolGrid>{editTools.map((t) => <Tool key={t[1]} item={t} />)}</ToolGrid></ToolPanel>
          <Overview><OverviewDrawing /></Overview>
          <Readout>
            <div><dt>X =</dt><dd>8.221240"</dd></div>
            <div><dt>Y =</dt><dd>-2.346278"</dd></div>
          </Readout>
        </ToolSide>
      </Main>

      <CommandBar onSubmit={(e) => e.preventDefault()}>
        <CommandButton type="button" aria-label="Line mode">
          <svg viewBox="0 0 20 20"><path d="M4 4L15 15M4 9V4H9M15 10V15H10" fill="none" stroke="#000" /></svg>
        </CommandButton>
        <CommandButton type="button" aria-label="Angle mode">
          <svg viewBox="0 0 20 20"><path d="M3 17L17 3M7 3V10H11M9 13L12 17H9M14 13H17V17H14Z" fill="none" stroke="#000" /></svg>
        </CommandButton>
        <CommandButton type="button" $on aria-label="Grid mode">
          <svg viewBox="0 0 20 20"><path d="M7 4H16V16H3V8ZM3 10H16M10 4V16" fill="none" stroke="#000" /></svg>
        </CommandButton>
        <CommandField>
          X Y :<CommandInput type="text" />
          <TextPointer viewBox="0 0 5 15" aria-hidden="true">
            <path d="M0 0.500H5M0 14.500H5M2.500 0V15" stroke="#000" strokeDasharray="1 1" fill="none" />
          </TextPointer>
        </CommandField>
        <CommandButton type="button" $on aria-label="Apply">
          <svg viewBox="0 0 20 20"><path d="M10 3V13M10 15V17" stroke="#000" strokeWidth="2" /></svg>
        </CommandButton>
        <Hint>&lt;M1&gt; - Select first corner</Hint>
        <UnitFrame>
          <UnitBox>
            <UnitSelect aria-label="Units" defaultValue="Inch"><option>Inch</option><option>MM</option></UnitSelect>
            <UnitMark />
          </UnitBox>
        </UnitFrame>
      </CommandBar>
      <StatusFrame><StatusBox><StatusLine role="status" /></StatusBox></StatusFrame>

      <TaskBar>
        <StartButton type="button" aria-label="Start">
          <svg width="38" height="38" viewBox="0 0 38 38">
            <defs>
              <radialGradient id="orb" cx="50%" cy="90%" r="90%">
                <stop offset="0" stopColor="#2fd0ff" /><stop offset="0.500" stopColor="#1c5c98" /><stop offset="1" stopColor="#a5c4dc" />
              </radialGradient>
            </defs>
            <circle cx="19" cy="19" r="18" fill="url(#orb)" stroke="#274c6b" />
            <path d="M11 11Q15 8 18 11L16 18Q13 16 9 18Z" fill="#f0582a" />
            <path d="M20 12Q24 14 28 11L26 19Q22 21 18 18Z" fill="#8cc63e" />
            <path d="M9 20Q12 18 16 20L14 27Q11 24 7 27Z" fill="#3aa0e8" />
            <path d="M17 20Q21 23 26 21L24 28Q19 30 15 27Z" fill="#ffce2e" />
          </svg>
        </StartButton>
        <PinnedButton type="button" aria-label="Calculator">
          <svg width="24" height="32" viewBox="0 0 24 32">
            <rect x="1" y="1" width="22" height="30" rx="2" fill="#b9d4ea" stroke="#7f9fbc" /><path d="M3 3H21" stroke="#f0a848" strokeWidth="2" />
            <rect x="4" y="6" width="17" height="8" fill="#e6f2fb" stroke="#7f9fbc" /><rect x="15" y="7" width="4" height="6" fill="none" stroke="#456" />
            <path d="M4 18H21M4 22H21M4 26H18" stroke="#6d8fae" strokeWidth="2" strokeDasharray="2 1" /><rect x="18" y="24" width="3" height="5" fill="#f0a848" />
          </svg>
        </PinnedButton>
        <TaskList>
          {tasks.map((group, i) => (
            <TaskGroup key={i}>
              {group.map(([label, Icon, tone], j) => (
                <TaskButton type="button" key={j} $tone={tone} $grouped={group.length > 1}><Icon />{label}</TaskButton>
              ))}
            </TaskGroup>
          ))}
        </TaskList>
        <Tray>
          <svg viewBox="0 0 16 16" aria-hidden="true"><path d="M4 11L8 6L12 11Z" fill="#fff" /></svg>
          <svg viewBox="0 0 16 16" aria-hidden="true"><path d="M1 7Q5 0 14 2Q12 5 7 6L5 14Q1 12 1 7Z" fill="#1c90e8" /><circle cx="10" cy="10" r="5" fill="#e8281c" /><path d="M7 10H13" stroke="#fff" strokeWidth="2" /></svg>
          <svg viewBox="0 0 16 16" aria-hidden="true"><path d="M12 1Q9 6 4 7Q2 10 4 13Q9 16 13 12L12 8H8" fill="none" stroke="#d81818" strokeWidth="3" /></svg>
          <svg viewBox="0 0 16 16" aria-hidden="true"><path d="M3 2V15" stroke="#fff" strokeWidth="2" /><path d="M4 2H8L9 4H14V10H4Z" fill="#fff" /><circle cx="11" cy="11" r="4" fill="#e02818" /><path d="M9 9L13 13M13 9L9 13" stroke="#fff" /></svg>
          <svg viewBox="0 0 16 16" aria-hidden="true"><path d="M6 4H15V11H6ZM10 11V14M7 14H13M3 2V8M1 2V5H5V2M3 8V14H8" fill="none" stroke="#fff" /></svg>
          <svg viewBox="0 0 16 16" aria-hidden="true"><path d="M1 6H4L8 2V14L4 10H1Z" fill="#fff" /><path d="M10 5Q12 8 10 11M12 3Q16 8 12 13" fill="none" stroke="#fff" /></svg>
          <TrayClock><span>21:00</span><span>2017/10/13</span></TrayClock>
        </Tray>
        <ShowDesktop type="button" aria-label="Show desktop" />
      </TaskBar>
    </Desktop>
  );
}
